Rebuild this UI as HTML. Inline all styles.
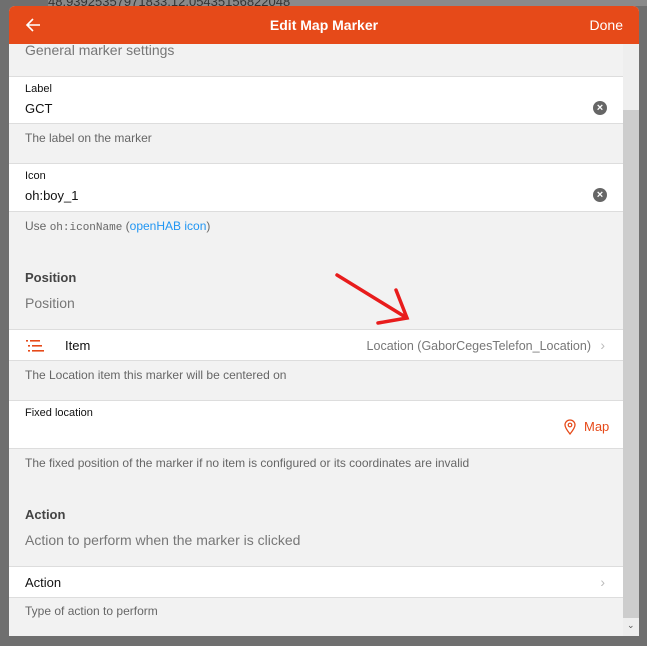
<!DOCTYPE html>
<html><head><meta charset="utf-8"><style>
*{box-sizing:border-box;margin:0;padding:0}
body{width:647px;height:646px;overflow:hidden;background:#6f6f6f;font-family:"Liberation Sans",sans-serif;position:relative}
.bgtext{position:absolute;left:48px;top:-6px;font-size:13px;color:#333;background:#8a8a8a;width:600px;height:12px;padding-left:0}
.dlg{position:absolute;left:9px;top:6px;width:630px;height:630px;background:#f2f2f2;border-radius:6px 6px 0 0;overflow:hidden}
.hdr{position:absolute;left:0;top:0;width:630px;height:38px;background:#e64a19;color:#fff}
.hdr .t{position:absolute;left:0;right:0;top:11px;text-align:center;font-size:14px;font-weight:bold}
.hdr .d{position:absolute;right:16px;top:11px;font-size:14px}
.hdr svg{position:absolute;left:16px;top:11px}
.sb{position:absolute;left:614px;top:38px;width:16px;height:592px;background:#eeeeee}
.thumb{position:absolute;left:614px;top:104px;width:16px;height:508px;background:#cdcdcd}
.abs{position:absolute;left:0;width:614px}
.row{background:#fff;border-top:1px solid #ddd;border-bottom:1px solid #ddd}
.tx{position:absolute;left:16px;white-space:nowrap}
.small{font-size:11px;color:#111}
.val{font-size:13px;color:#111}
.desc{font-size:12px;color:#666}
.sect{font-size:14px;color:#777}
.bold{font-size:13px;font-weight:bold;color:#444}
.clr{position:absolute;right:16px;width:14px;height:14px;border-radius:50%;background:#666;color:#fff;font-size:11px;line-height:14px;text-align:center;font-weight:bold}
.chev{position:absolute;right:18px;color:#bbb;font-size:14px}
</style></head><body>
<div class="bgtext">48.93925357971833,12.05435156822048</div>
<div class="dlg">
<div class="hdr">
<svg width="16" height="16" viewBox="0 0 16 16"><path d="M15 8H2M8 2L2 8l6 6" stroke="#fff" stroke-width="1.6" fill="none"/></svg>
<div class="t">Edit Map Marker</div><div class="d">Done</div></div>
<div class="tx sect" style="top:36px">General marker settings</div>
<div class="abs row" style="top:70px;height:48px">
<div class="tx small" style="top:6px">Label</div>
<div class="tx val" style="top:24px">GCT</div>
<div class="clr" style="top:24px">×</div></div>
<div class="tx desc" style="top:125px">The label on the marker</div>
<div class="abs row" style="top:157px;height:49px">
<div class="tx small" style="top:6px">Icon</div>
<div class="tx val" style="top:24px">oh:boy_1</div>
<div class="clr" style="top:24px">×</div></div>
<div class="tx desc" style="top:213px">Use <span style="font-family:'Liberation Mono',monospace;font-size:11px">oh:iconName</span> (<span style="color:#2196f3">openHAB icon</span>)</div>
<div class="tx bold" style="top:264px">Position</div>
<div class="tx sect" style="top:289px">Position</div>
<div class="abs row" style="top:323px;height:32px">
<svg style="position:absolute;left:17px;top:10px" width="18" height="12" viewBox="0 0 18 12"><g fill="#e64a19"><rect x="0" y="0" width="2" height="1.6"/><rect x="4" y="0" width="10" height="1.6"/><rect x="2" y="5" width="2" height="1.6"/><rect x="6" y="5" width="10" height="1.6"/><rect x="2" y="10" width="2" height="1.6"/><rect x="6" y="10" width="12" height="1.6"/></g></svg>
<div class="tx val" style="left:56px;top:8px">Item</div>
<div class="tx" style="left:auto;right:32px;top:9px;font-size:12.5px;color:#777">Location (GaborCegesTelefon_Location)</div>
<div class="chev" style="top:7px">›</div></div>
<div class="tx desc" style="top:362px">The Location item this marker will be centered on</div>
<div class="abs row" style="top:394px;height:49px">
<div class="tx small" style="top:6px">Fixed location</div>
<svg style="position:absolute;left:555px;top:18px" width="12" height="16" viewBox="0 0 12 16"><path d="M6 15C2 10 1 8 1 6a5 5 0 0 1 10 0c0 2-1 4-5 9z" stroke="#e64a19" stroke-width="1.3" fill="none"/><circle cx="6" cy="6" r="1.8" stroke="#e64a19" stroke-width="1.2" fill="none"/></svg>
<div class="tx" style="left:575px;top:18px;font-size:13px;color:#e64a19">Map</div></div>
<div class="tx desc" style="top:450px">The fixed position of the marker if no item is configured or its coordinates are invalid</div>
<div class="tx bold" style="top:501px">Action</div>
<div class="tx sect" style="top:526px">Action to perform when the marker is clicked</div>
<div class="abs row" style="top:560px;height:32px">
<div class="tx val" style="top:8px">Action</div>
<div class="chev" style="top:7px">›</div></div>
<div class="tx desc" style="top:598px">Type of action to perform</div>
<div class="sb"></div><div class="thumb"></div>
<div style="position:absolute;left:618px;top:614px;font-size:9px;color:#555">&#8964;</div>
</div>
<svg style="position:absolute;left:0;top:0" width="647" height="646"><path d="M337 275L407 318M378 323L407 318L396 290" stroke="#e81c1c" stroke-width="3.5" fill="none" stroke-linecap="round"/></svg>
</body></html>
